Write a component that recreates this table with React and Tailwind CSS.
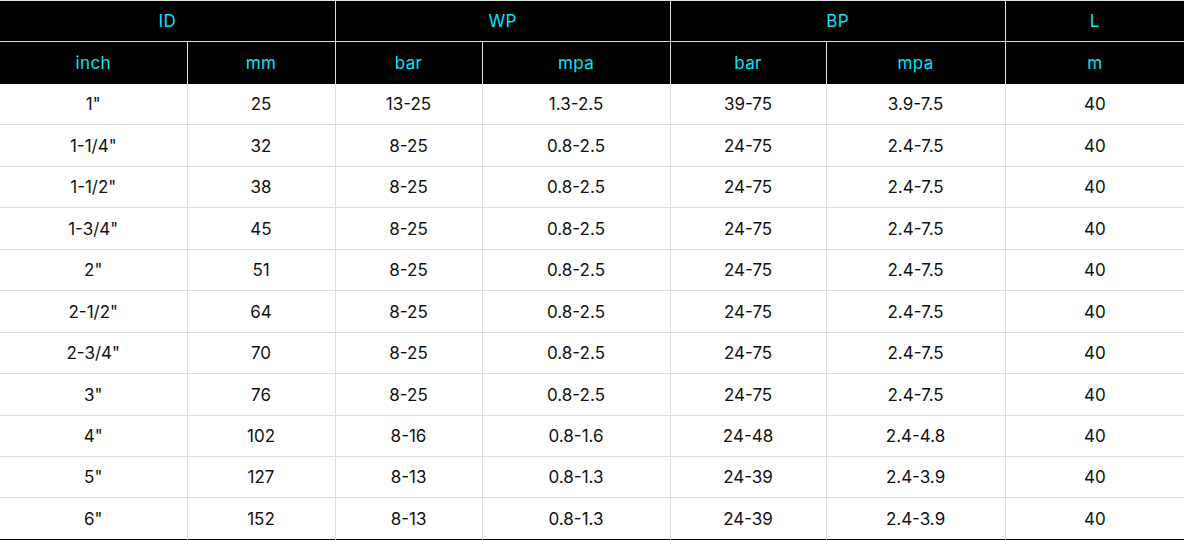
import React from "react";

const rows = [
  ['1"', "25", "13-25", "1.3-2.5", "39-75", "3.9-7.5", "40"],
  ['1-1/4"', "32", "8-25", "0.8-2.5", "24-75", "2.4-7.5", "40"],
  ['1-1/2"', "38", "8-25", "0.8-2.5", "24-75", "2.4-7.5", "40"],
  ['1-3/4"', "45", "8-25", "0.8-2.5", "24-75", "2.4-7.5", "40"],
  ['2"', "51", "8-25", "0.8-2.5", "24-75", "2.4-7.5", "40"],
  ['2-1/2"', "64", "8-25", "0.8-2.5", "24-75", "2.4-7.5", "40"],
  ['2-3/4"', "70", "8-25", "0.8-2.5", "24-75", "2.4-7.5", "40"],
  ['3"', "76", "8-25", "0.8-2.5", "24-75", "2.4-7.5", "40"],
  ['4"', "102", "8-16", "0.8-1.6", "24-48", "2.4-4.8", "40"],
  ['5"', "127", "8-13", "0.8-1.3", "24-39", "2.4-3.9", "40"],
  ['6"', "152", "8-13", "0.8-1.3", "24-39", "2.4-3.9", "40"],
];

const units = ["inch", "mm", "bar", "mpa", "bar", "mpa", "m"];

const App = () => {
  return (
    <div className="w-[1184px] h-[540px] bg-white overflow-hidden" style={{ fontFamily: "Inter, 'Noto Sans', sans-serif" }}>
      <table className="w-[1184px] table-fixed border-collapse text-center text-[17px] border-t border-t-[#dddddd] border-b border-b-black">
        <colgroup>
          <col className="w-[187px]" />
          <col className="w-[148px]" />
          <col className="w-[147px]" />
          <col className="w-[188px]" />
          <col className="w-[156px]" />
          <col className="w-[179px]" />
          <col className="w-[179px]" />
        </colgroup>
        <thead className="bg-black text-[#00e5f5] tracking-[0.02em]">
          {/* group headers */}
          <tr className="h-[41px]">
            <th colSpan={2} className="font-normal border-r border-[#dddddd] p-0 pt-[2px]">ID</th>
            <th colSpan={2} className="font-normal border-x border-[#dddddd] p-0 pt-[2px]">WP</th>
            <th colSpan={2} className="font-normal border-x border-[#dddddd] p-0 pt-[2px]">BP</th>
            <th className="font-normal border-l border-[#dddddd] p-0 pt-[2px]">L</th>
          </tr>
          <tr className="h-[42px] border-t border-[#dddddd]">
            {units.map((u, i) => (
              <th
                key={i}
                className={`font-normal p-0 pt-[2px] border-[#dddddd] ${i === 0 ? "border-r" : i === 6 ? "border-l" : "border-x"}`}
              >
                {u}
              </th>
            ))}
          </tr>
        </thead>
        <tbody className="text-[#111111]">
          {rows.map((r, ri) => (
            <tr key={ri} className={`h-[41.45px] ${ri === 0 ? "" : "border-t border-[#dddddd]"}`}>
              {r.map((c, ci) => (
                <td
                  key={ci}
                  className={`p-0 pt-[2px] border-[#dddddd] ${ci === 0 ? "border-r" : ci === 6 ? "border-l" : "border-x"}`}
                >
                  {c}
                </td>
              ))}
            </tr>
          ))}
        </tbody>
      </table>
    </div>
  );
};

export default App;
